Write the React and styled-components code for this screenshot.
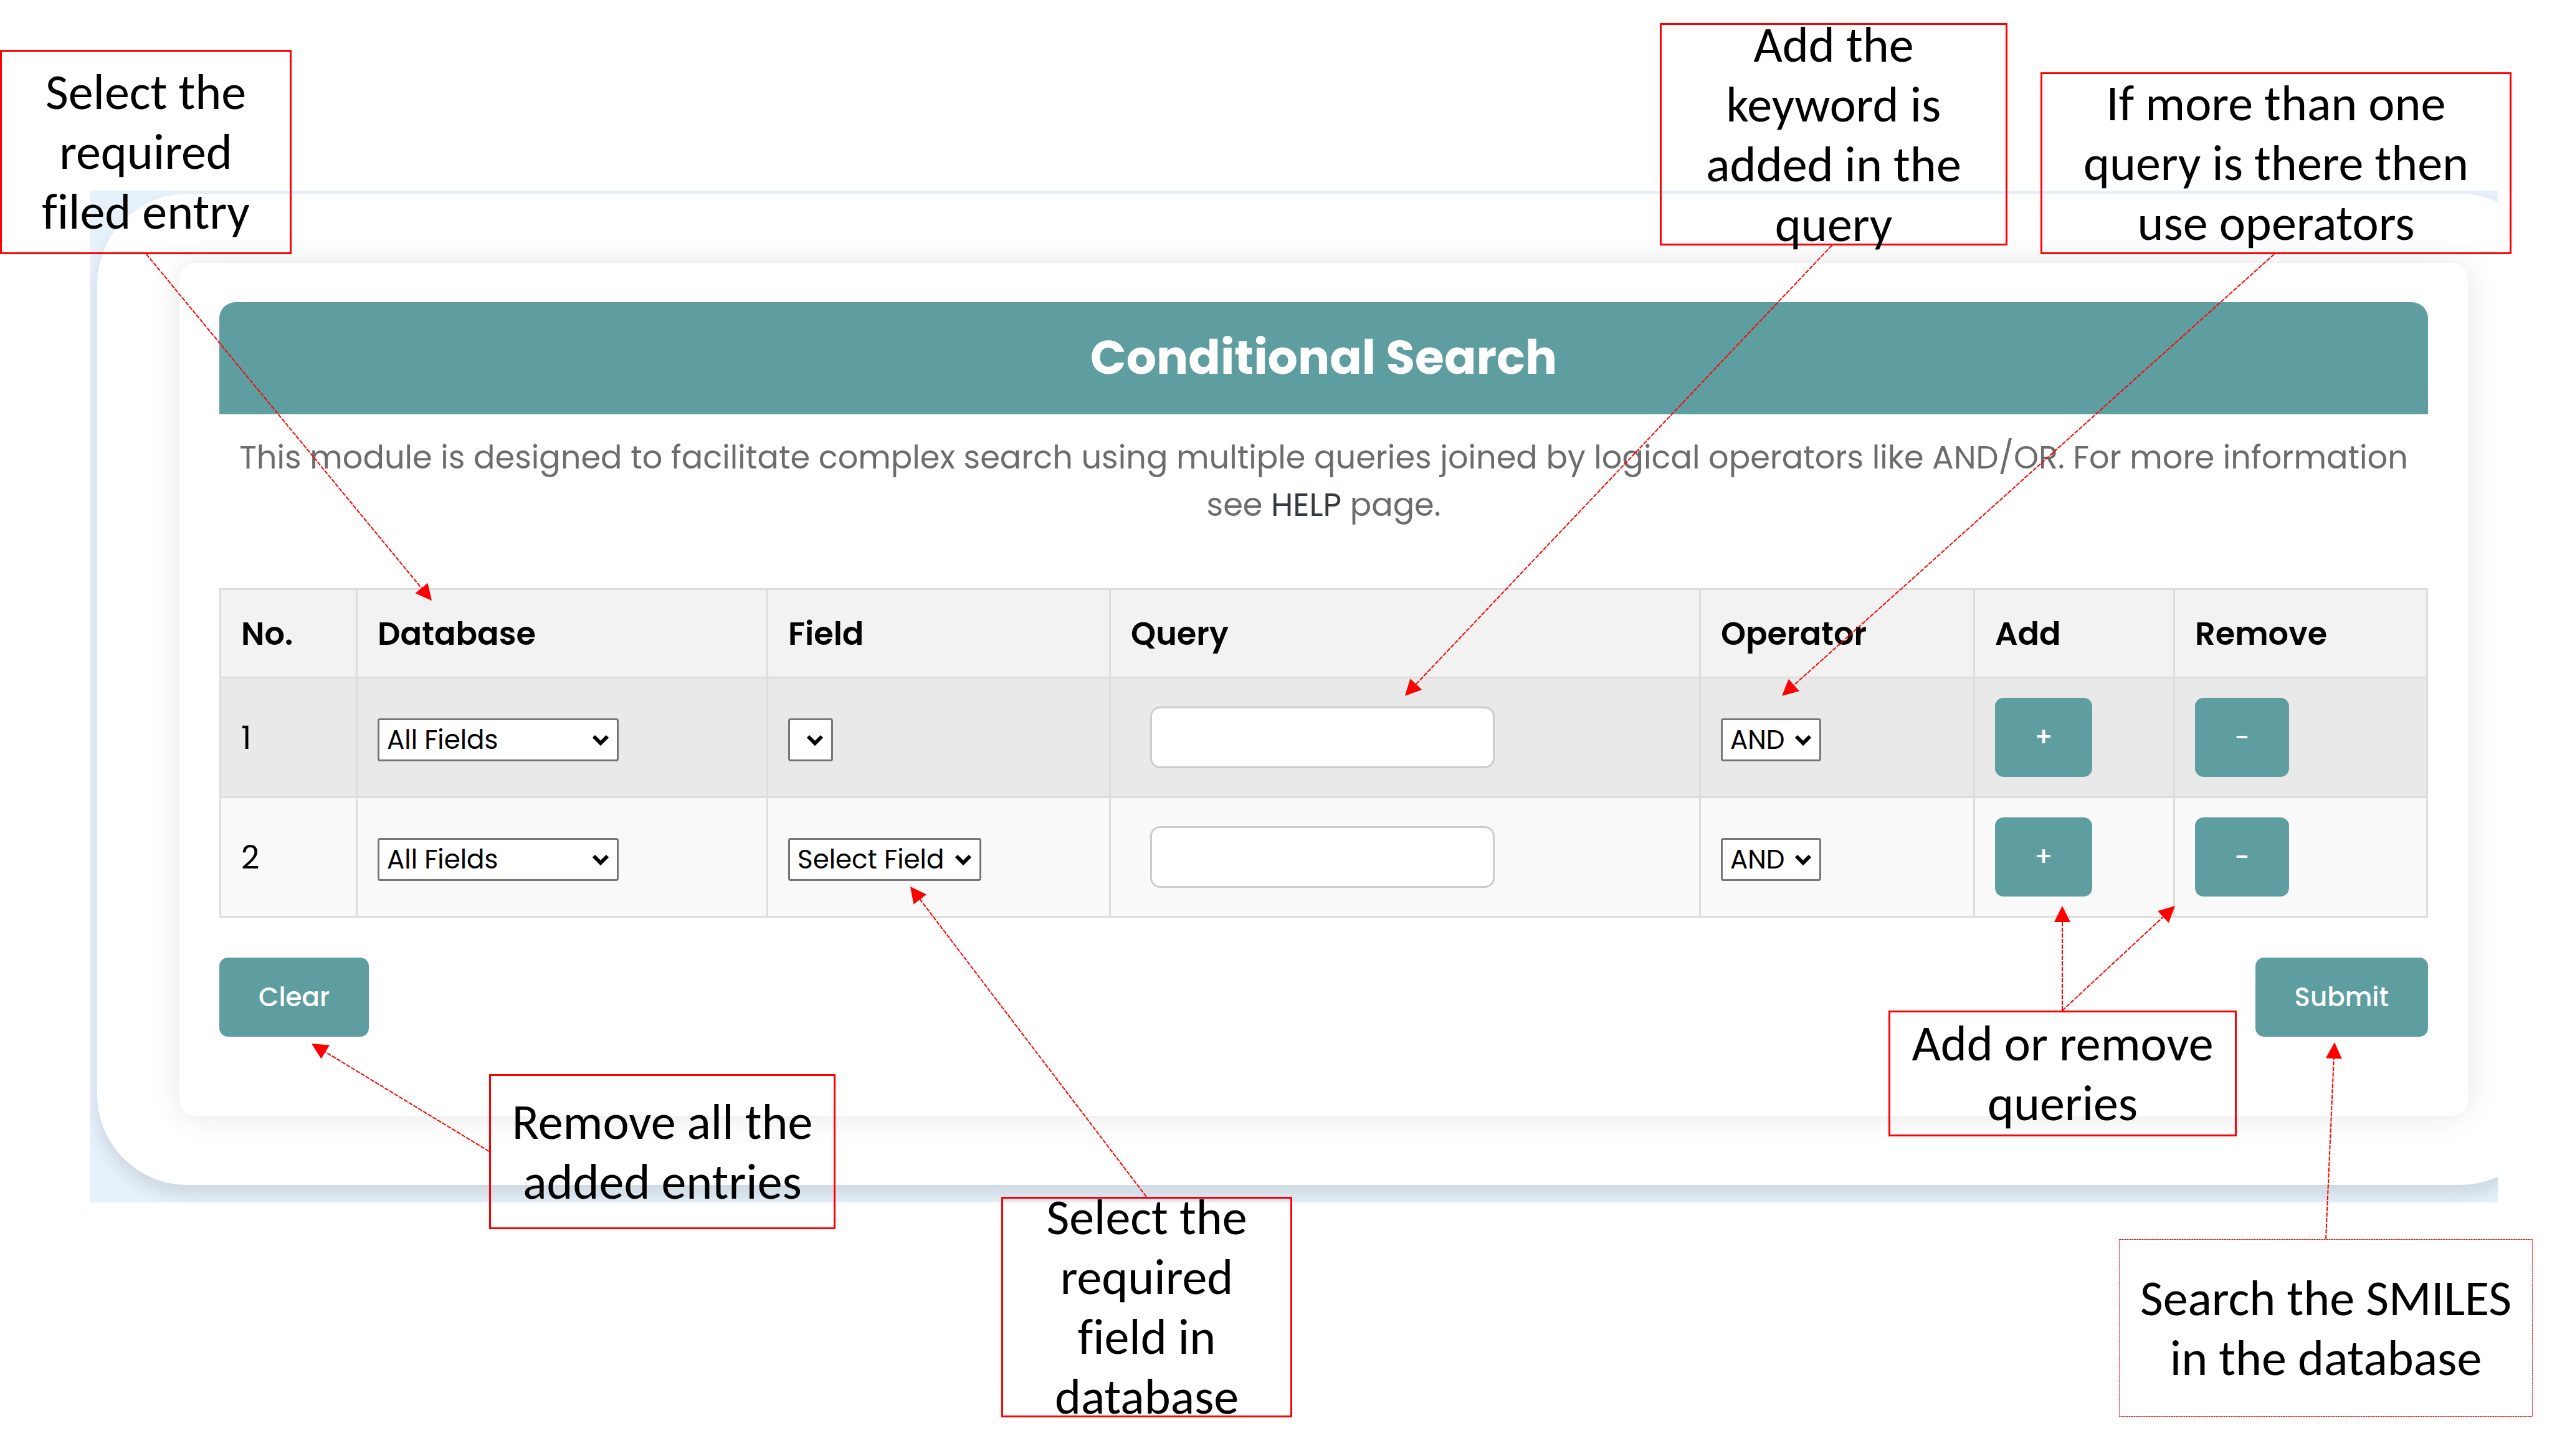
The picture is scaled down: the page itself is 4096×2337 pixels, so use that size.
import React, { useState } from "react";
import styled, { createGlobalStyle, css } from "styled-components";

const teal = "#5f9ea0";
const red = "#ff0000";

const GlobalStyle = createGlobalStyle`
  * { box-sizing: border-box; }
  body {
    margin: 0;
    background: #ffffff;
    font-family: Poppins, Inter, sans-serif;
    font-size: 51px;
    line-height: 76px;
    color: #000000;
  }
`;

const Page = styled.main`
  position: relative;
  display: flex;
  flex-direction: column;
  min-height: 100vh;
  overflow: hidden;
`;

const Backdrop = styled.div`
  margin: 306px 87px 0 144px;
  padding: 5px 0 28px 12px;
  background: #e6f1fb;
  overflow: hidden;
`;

const Panel = styled.div`
  margin-right: -84px;
  padding: 111px 132px 111px;
  border-radius: 145px;
  background: #ffffff;
  box-shadow: 0 16px 28px rgba(0, 0, 0, 0.11);
`;

const Card = styled.form`
  padding: 63px 64px 127px;
  border-radius: 26px;
  background: #ffffff;
  box-shadow: 0 0 52px rgba(0, 0, 0, 0.1);
`;

const Title = styled.h1`
  margin: 0;
  padding: 32px 0 34px;
  border-radius: 26px 26px 0 0;
  background: ${teal};
  color: #ffffff;
  font-size: 76px;
  font-weight: 700;
  line-height: 114px;
  text-align: center;
`;

const Intro = styled.p`
  margin: 31px 0 96px;
  color: #6c6c6c;
  text-align: center;
`;

const HelpLink = styled.a`
  color: #343a40;
  text-decoration: none;
`;

const Table = styled.table`
  width: 100%;
  table-layout: fixed;
  border-collapse: collapse;
`;

const Col = styled.col`
  width: ${(p) => p.$width};
`;

const cell = css`
  padding: 0 32px;
  border: 3px solid #dddddd;
  text-align: left;
  vertical-align: middle;
`;

const HeadCell = styled.th`
  ${cell}
  height: 142px;
  background: #f2f2f2;
  font-weight: 600;
`;

const Cell = styled.td`
  ${cell}
  height: 192px;
`;

const Row = styled.tr`
  background: ${(p) => (p.$active ? "#e9e9e9" : "#f9f9f9")};
`;

const SelectBox = styled.span`
  position: relative;
  display: inline-flex;
`;

const SelectInput = styled.select`
  appearance: none;
  width: ${(p) => p.$width};
  height: 69px;
  margin: 0;
  padding: 0 0 0 12px;
  border: 3px solid #767676;
  border-radius: 4px;
  background: #ffffff;
  color: #000000;
  font-family: inherit;
  font-size: 42px;
  line-height: 63px;
`;

const Chevron = styled.svg`
  position: absolute;
  top: 25px;
  right: 14px;
  width: 30px;
  height: 20px;
  pointer-events: none;
`;

const QueryInput = styled.input`
  display: block;
  width: 553px;
  height: 99px;
  margin: 0 31px;
  padding: 0 26px;
  border: 3px solid #cccccc;
  border-radius: 16px;
  background: #ffffff;
  font-family: inherit;
  font-size: 42px;
`;

const Button = styled.button`
  height: 127px;
  padding: 0 63px;
  border: 0;
  border-radius: 14px;
  background: ${teal};
  color: #ffffff;
  font-family: inherit;
  font-size: 42px;
  font-weight: 500;
  line-height: 63px;
`;

const Actions = styled.div`
  display: flex;
  justify-content: space-between;
  margin-top: 64px;
`;

const Callout = styled.aside`
  position: absolute;
  left: ${(p) => p.$x}px;
  top: ${(p) => p.$y}px;
  display: flex;
  align-items: center;
  justify-content: center;
  width: ${(p) => p.$w}px;
  height: ${(p) => p.$h}px;
  border: ${(p) => (p.$thin ? "0" : `3px solid ${red}`)};
  font-family: Carlito, Calibri, Lato, sans-serif;
  font-size: 80px;
  font-variant-ligatures: none;
  line-height: 96px;
  text-align: center;
  white-space: pre-line;
`;

const Overlay = styled.svg`
  position: absolute;
  inset: 0;
  width: 100%;
  height: 100%;
  pointer-events: none;
`;

const callouts = [
  { x: 0, y: 80, w: 468, h: 328, text: "Select the\nrequired\nfiled entry" },
  { x: 2664, y: 37, w: 558, h: 357, text: "Add the\nkeyword is\nadded in the\nquery" },
  { x: 3275, y: 116, w: 756, h: 292, text: "If more than one\nquery is there then\nuse operators" },
  { x: 785, y: 1724, w: 556, h: 249, text: "Remove all the\nadded entries" },
  { x: 1607, y: 1921, w: 467, h: 354, text: "Select the\nrequired\nfield in\ndatabase" },
  { x: 3031, y: 1622, w: 559, h: 202, text: "Add or remove\nqueries" },
  { x: 3401, y: 1989, w: 664, h: 285, text: "Search the SMILES\nin the database", thin: true },
];

const arrows = [
  [235, 408, 693, 964],
  [2940, 394, 2255, 1117],
  [3650, 408, 2860, 1117],
  [785, 1848, 500, 1675],
  [1840, 1921, 1461, 1423],
  [3310, 1622, 3310, 1454],
  [3310, 1622, 3491, 1454],
  [3733, 1989, 3747, 1673],
];

function Arrow({ from, to }) {
  const dx = to[0] - from[0];
  const dy = to[1] - from[1];
  const length = Math.hypot(dx, dy);
  const angle = (Math.atan2(dy, dx) * 180) / Math.PI;
  return (
    <g transform={`translate(${from[0]} ${from[1]}) rotate(${angle})`}>
      <line x1="0" y1="0" x2={length - 26} y2="0" stroke={red} strokeWidth="2" strokeDasharray="7 2" />
      <polygon points={`${length},0 ${length - 26},-13 ${length - 26},13`} fill={red} />
    </g>
  );
}

function Select({ label, width, options }) {
  return (
    <SelectBox>
      <SelectInput aria-label={label} $width={width}>
        {options.map((option) => (
          <option key={option}>{option}</option>
        ))}
      </SelectInput>
      <Chevron viewBox="0 0 30 20" aria-hidden="true">
        <path d="M4 4 L15 15 L26 4" fill="none" stroke="#000000" strokeWidth="6" />
      </Chevron>
    </SelectBox>
  );
}

const initialRows = [
  { id: 1, fields: [""], fieldWidth: "72px", active: true },
  { id: 2, fields: ["Select Field"], fieldWidth: "310px", active: false },
];

export default function App() {
  const [rows, setRows] = useState(initialRows);
  const addRow = () =>
    setRows([...rows, { ...initialRows[1], id: Math.max(0, ...rows.map((r) => r.id)) + 1 }]);
  const removeRow = (id) => setRows(rows.length > 1 ? rows.filter((r) => r.id !== id) : rows);

  return (
    <>
      <GlobalStyle />
      <Page>
        <Backdrop>
          <Panel>
            <Card onSubmit={(e) => e.preventDefault()}>
              <Title>Conditional Search</Title>
              <Intro>
                This module is designed to facilitate complex search using multiple queries joined by
                logical operators like AND/OR. For more information see{" "}
                <HelpLink href="#help">HELP</HelpLink> page.
              </Intro>
              <Table>
                <colgroup>
                  <Col $width="219px" />
                  <Col $width="659px" />
                  <Col $width="550px" />
                  <Col $width="auto" />
                  <Col $width="440px" />
                  <Col $width="321px" />
                  <Col $width="406px" />
                </colgroup>
                <thead>
                  <tr>
                    {["No.", "Database", "Field", "Query", "Operator", "Add", "Remove"].map((name) => (
                      <HeadCell key={name} scope="col">{name}</HeadCell>
                    ))}
                  </tr>
                </thead>
                <tbody>
                  {rows.map((row, i) => (
                    <Row key={row.id} $active={row.active}>
                      <Cell>{i + 1}</Cell>
                      <Cell>
                        <Select label={`Database ${i + 1}`} width="387px" options={["All Fields"]} />
                      </Cell>
                      <Cell>
                        <Select label={`Field ${i + 1}`} width={row.fieldWidth} options={row.fields} />
                      </Cell>
                      <Cell>
                        <QueryInput type="text" aria-label={`Query ${i + 1}`} />
                      </Cell>
                      <Cell>
                        <Select label={`Operator ${i + 1}`} width="161px" options={["AND", "OR"]} />
                      </Cell>
                      <Cell>
                        <Button type="button" onClick={addRow}>+</Button>
                      </Cell>
                      <Cell>
                        <Button type="button" onClick={() => removeRow(row.id)}>-</Button>
                      </Cell>
                    </Row>
                  ))}
                </tbody>
              </Table>
              <Actions>
                <Button type="reset" onClick={() => setRows(initialRows)}>Clear</Button>
                <Button type="submit">Submit</Button>
              </Actions>
            </Card>
          </Panel>
        </Backdrop>

        {callouts.map((c) => (
          <Callout key={c.text} $x={c.x} $y={c.y} $w={c.w} $h={c.h} $thin={c.thin}>
            {c.text}
          </Callout>
        ))}

        <Overlay aria-hidden="true">
          {callouts
            .filter((c) => c.thin)
            .map((c) => (
              <rect
                key={c.text}
                x={c.x + 0.5}
                y={c.y + 0.5}
                width={c.w - 1}
                height={c.h - 1}
                fill="none"
                stroke="#e01818"
                strokeWidth="1"
                strokeDasharray="3 1"
              />
            ))}
          {arrows.map(([x1, y1, x2, y2]) => (
            <Arrow key={`${x2}-${y2}`} from={[x1, y1]} to={[x2, y2]} />
          ))}
        </Overlay>
      </Page>
    </>
  );
}
